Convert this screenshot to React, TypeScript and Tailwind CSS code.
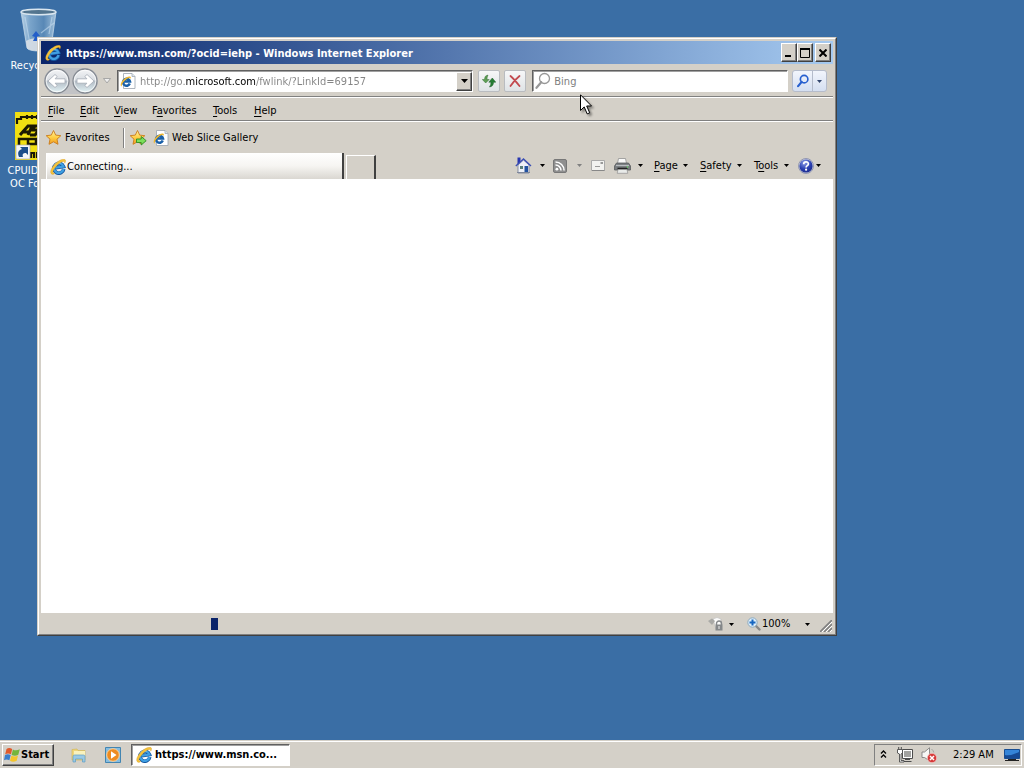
import type { ReactNode } from "react";

type IconProps = { className?: string };

function IeIcon({ className = "size-4" }: IconProps) {
  return (
    <svg viewBox="0 0 16 16" className={`${className} shrink-0`} aria-hidden="true">
      <g transform="rotate(-8 8 8)">
        <path d="M13.400 10.800A4.900 4.900 0 1 1 13.500 8.400H5.500" fill="none" stroke="#14569f" strokeWidth="3.600" />
        <path d="M13.200 10.800A4.800 4.800 0 1 1 13.400 8.300H5.500" fill="none" stroke="#3f9fe2" strokeWidth="2.300" />
        <path d="M4.800 6.200A4.200 4.200 0 0 1 11 4.600" fill="none" stroke="#b9e6fb" strokeWidth="1.200" />
      </g>
      <path d="M3 15.500C-1.200 15 .6 9.400 5.400 4.600 9.800.2 14.800-.8 15.500 1.200c.3.900-.1 2-.7 3 .1-1.900-1.200-2.300-3.200-1.200C8 4.900 4.100 9.300 3 12.200c-.5 1.300.1 2 1.800 1.700-.7.900-1.200 1.500-1.800 1.600Z" fill="#f5c23a" stroke="#c98a14" strokeWidth=".3" />
    </svg>
  );
}

function PageIcon({ className = "size-4" }: IconProps) {
  return (
    <svg viewBox="0 0 16 16" className={`${className} shrink-0`} aria-hidden="true">
      <path d="M3.500 .5H12l3 3V15.500H3.500Z" fill="#fff" stroke="#9aa3ad" strokeWidth=".8" />
      <path d="M12 .5V3.500H15" fill="#dde6ee" stroke="#9aa3ad" strokeWidth=".7" />
      <path d="M9.800 10.600A3.500 3.500 0 1 1 10 8.600H3.600" fill="none" stroke="#1a60a8" strokeWidth="2.500" />
      <path d="M1.500 13.500C-.8 12 2.200 7 6.200 4.600c2.800-1.600 5.200-1.400 4.600 1.100-.5-1-2.200-.9-4 .3C3.800 8 1.700 11 1.500 13.500Z" fill="#eeb62f" />
    </svg>
  );
}

function Star({ add = false }: { add?: boolean }) {
  return (
    <svg viewBox="0 0 18 17" className="h-[17px] w-[18px] shrink-0" aria-hidden="true">
      <defs>
        <linearGradient id="starFill" x1="0" y1="0" x2="0" y2="1">
          <stop offset="0" stopColor="#fff3a6" />
          <stop offset=".5" stopColor="#ffcf45" />
          <stop offset="1" stopColor="#ef9a20" />
        </linearGradient>
      </defs>
      <path d="M8.500 1.500l2.200 4.600 5.100.6-3.800 3.500 1 5.100-4.500-2.500L4 15.300l1-5.100L1.200 6.700l5.100-.6Z" fill="url(#starFill)" stroke="#c97b1a" strokeWidth=".9" strokeLinejoin="round" />
      {add && <path d="M7.500 10h4.700V7.500l5 4.200-5 4.300v-2.500H7.500Z" fill="#7ddf5a" stroke="#2d8c25" strokeWidth=".9" />}
    </svg>
  );
}

function Caret({ className = "text-black" }: IconProps) {
  return (
    <svg viewBox="0 0 5 3" className={`${className} h-[3px] w-[5px] shrink-0`} aria-hidden="true">
      <path d="M0 0H5L2.500 3Z" fill="currentColor" />
    </svg>
  );
}

function NavCircle({ forward = false }: { forward?: boolean }) {
  return (
    <button aria-label={forward ? "Forward" : "Back"} className="size-[26px] shrink-0">
      <svg viewBox="0 0 26 26" className="size-full" aria-hidden="true">
        <defs>
          <linearGradient id="navFill" x1="0" y1="0" x2="0" y2="1">
            <stop offset="0" stopColor="#f4f5f7" />
            <stop offset=".46" stopColor="#d9dde2" />
            <stop offset=".5" stopColor="#b0b9c3" />
            <stop offset="1" stopColor="#e6f6f8" />
          </linearGradient>
        </defs>
        <circle cx="13" cy="13" r="12" fill="url(#navFill)" stroke="#858a92" strokeWidth="1.300" />
        <circle cx="13" cy="13" r="10.800" fill="none" stroke="#fff" strokeOpacity=".75" />
        <g transform={forward ? "matrix(-1 0 0 1 26 0)" : undefined}>
          <path d="M4 13l7-6.500 2.200 2-2.100 2.300H21v4.400h-9.900l2.100 2.300-2.200 2Z" fill="#fff" stroke="#a4abb5" strokeWidth=".8" strokeLinejoin="round" />
        </g>
      </svg>
    </button>
  );
}

function HomeIcon() {
  return (
    <svg viewBox="0 0 17 17" className="size-[17px] shrink-0" aria-hidden="true">
      <path d="M2.500 .5h3v4.500L2.500 8Z" fill="#2836b0" />
      <path d="M3 8l5.500-5L14 8v8H3Z" fill="#eef1f8" stroke="#7e879b" strokeWidth=".9" />
      <path d="M.8 9L8.500 2 16 9" fill="none" stroke="#3b4fb4" strokeWidth="1.300" />
      <path d="M5 9h3v3H5Z" fill="#587f79" />
      <path d="M9.500 9h3.500v6.500H9.500Z" fill="#2252a0" />
      <path d="M2 15.500h13" stroke="#7e879b" />
    </svg>
  );
}

function RssIcon() {
  return (
    <svg viewBox="0 0 14 14" className="size-[14px] shrink-0" aria-hidden="true">
      <rect x=".5" y=".5" width="13" height="13" rx="1.500" fill="#8f8f8f" stroke="#777" />
      <circle cx="3.900" cy="10.200" r="1.400" fill="#fff" />
      <path d="M2.500 6a5.500 5.500 0 0 1 5.500 5.500M2.500 2.900a8.600 8.600 0 0 1 8.600 8.600" fill="none" stroke="#fff" strokeWidth="1.500" />
    </svg>
  );
}

function MailIcon() {
  return (
    <svg viewBox="0 0 14 11" className="h-[11px] w-[14px] shrink-0" aria-hidden="true">
      <path d="M.5.500h13v10H.5Z" fill="#f2f2f0" stroke="#aaa" />
      <path d="M9.500 2h2.500v2H9.500Z" fill="#999" />
      <path d="M4 6.500h5" stroke="#999" />
      <path d="M1 10.500h12.500" stroke="#888" />
    </svg>
  );
}

function PrinterIcon() {
  return (
    <svg viewBox="0 0 17 16" className="h-4 w-[17px] shrink-0" aria-hidden="true">
      <path d="M4.500.5h7l1 5h-9Z" fill="#fafafa" stroke="#929292" strokeWidth=".8" />
      <path d="M2.500 5h12l2 3v4H.5V8Z" fill="#777b7e" stroke="#595c5e" strokeWidth=".8" />
      <path d="M2 7.500h13" stroke="#b8bcbf" strokeWidth="1.200" />
      <path d="M3.500 10.500h10" stroke="#222" strokeWidth="1.600" />
      <path d="M4 11.500h9l.8 3.800H3.200Z" fill="#e9ebe9" stroke="#919191" strokeWidth=".7" />
      <circle cx="13.500" cy="9" r=".8" fill="#6be06b" />
    </svg>
  );
}

function HelpIcon() {
  return (
    <svg viewBox="0 0 16 16" className="size-4 shrink-0" aria-hidden="true">
      <defs>
        <radialGradient id="helpFill" cx=".4" cy=".25" r=".8">
          <stop offset="0" stopColor="#8c9ee8" />
          <stop offset=".6" stopColor="#2a3fb0" />
          <stop offset="1" stopColor="#1b2b8a" />
        </radialGradient>
      </defs>
      <circle cx="8" cy="8" r="7.500" fill="#c9cddd" stroke="#8088a8" strokeWidth=".8" />
      <circle cx="8" cy="8" r="6.600" fill="url(#helpFill)" />
      <path d="M5.700 6.200c0-3 4.700-3 4.700-.2 0 1.600-2.300 1.700-2.300 3.400" fill="none" stroke="#fff" strokeWidth="1.700" />
      <circle cx="8.100" cy="11.700" r="1.100" fill="#fff" />
    </svg>
  );
}

function Magnifier({ className = "", thin = false }: IconProps & { thin?: boolean }) {
  return (
    <svg viewBox="0 0 16 18" className={`${className} shrink-0`} fill="none" aria-hidden="true">
      <circle cx="9.500" cy="6.500" r="5" stroke="currentColor" strokeWidth={thin ? 1.300 : 2.200} />
      <path d="M6.200 10.200L1.500 15.800" stroke="currentColor" strokeWidth={thin ? 2.200 : 3} strokeLinecap="round" />
    </svg>
  );
}

function RecycleBin() {
  return (
    <svg viewBox="0 0 40 48" className="h-12 w-10" aria-hidden="true">
      <defs>
        <linearGradient id="binFill" x1="0" x2="1">
          <stop offset="0" stopColor="#b9d2e6" />
          <stop offset=".25" stopColor="#7ba5cb" />
          <stop offset=".65" stopColor="#5888b6" />
          <stop offset="1" stopColor="#a4c2db" />
        </linearGradient>
      </defs>
      <path d="M2 5l6 36c1 4 23 4 24 0L37 5Z" fill="url(#binFill)" stroke="#c2d7e8" strokeWidth=".8" />
      <path d="M7 34c6-4 20-4 26 0l-1 7c-2 4-22 4-24 0Z" fill="#dfe3e8" opacity=".85" />
      <path d="M6 10l5 27M33 10l-3 17M22 26l13-10" stroke="#c5dcef" strokeWidth="1.200" opacity=".6" />
      <path d="M13 29l4-5 4 5h-3l3 5h-7l2-4Z" fill="#245fc9" />
      <ellipse cx="19.500" cy="5" rx="17.500" ry="2.800" fill="#53758f" stroke="#dbe7f0" strokeWidth="1.400" />
    </svg>
  );
}

function CpuIcon() {
  return (
    <svg viewBox="0 0 48 48" className="size-12" aria-hidden="true">
      <path d="M0 0H48V48H0Z" fill="#f0df12" />
      <path d="M2 12V7h4V5h37v7M12 3v4m5-4v4m5-4v4m5-4v4m5-4v4m5-4v4M16 46v-5h3v5m3 0v-5h3v5m3 0v-5h3v5" fill="none" stroke="#1b1903" strokeWidth="2.200" />
      <path d="M5 23l8-9h4l-4 9M8 20h7M28 14h-8l-3 4h7l-4 5h-5" fill="none" stroke="#1b1903" strokeWidth="3" />
      <path d="M13 27H4v8M13 37V27h8v5h-7M24 26v9" fill="none" stroke="#1b1903" strokeWidth="2.500" />
      <path d="M1 33h14v14H1Z" fill="#f5f7f9" stroke="#aaa" strokeWidth=".7" />
      <path d="M4 45c-2-5 0-7 3-8L5 35h8v8l-2-2c-3 0-4 1-3 4Z" fill="#1c4e8a" />
    </svg>
  );
}

function DesktopIcon({ icon, children }: { icon: ReactNode; children: ReactNode }) {
  return (
    <button className="flex w-[78px] flex-col items-center gap-1 leading-[13px] text-white">
      {icon}
      <span>{children}</span>
    </button>
  );
}

const bevel = "border border-t-white border-l-white border-r-[#404040] border-b-[#404040] bg-[#d4d0c8] shadow-[inset_-1px_-1px_#808080]";

function CommandMenu({ mnemonic, before = "", after, className }: { mnemonic: string; before?: string; after: string; className: string }) {
  return (
    <button className={`${className} flex shrink-0 items-center justify-between`}>
      <span>{before}<u className="underline-offset-2">{mnemonic}</u>{after}</span>
      <Caret />
    </button>
  );
}

function TitleBar() {
  return (
    <header className="flex h-[23px] shrink-0 items-center bg-linear-to-r from-[#0a246a] to-[#a6caf0] pr-[2px] pl-1 font-bold text-white">
      <IeIcon />
      <h1 className="ml-[5px] grow truncate pt-[2px]">https://www.msn.com/?ocid=iehp - Windows Internet Explorer</h1>
      <button aria-label="Minimize" className={`${bevel} flex h-[19px] w-4 items-end pb-[4px] pl-[3px]`}>
        <svg viewBox="0 0 6 2" className="h-[2px] w-[6px]" aria-hidden="true"><path d="M0 0H6V2H0Z" /></svg>
      </button>
      <button aria-label="Maximize" className={`${bevel} flex h-[19px] w-4 items-center justify-center`}>
        <svg viewBox="0 0 10 10" className="size-[10px]" aria-hidden="true"><path d="M.5 1V9.500H9.500V1M0 1H10" fill="none" stroke="#000" /><path d="M0 0H10V2H0Z" /></svg>
      </button>
      <button aria-label="Close" className={`${bevel} ml-[2px] flex h-[19px] w-4 items-center justify-center`}>
        <svg viewBox="0 0 8 8" className="size-2" aria-hidden="true"><path d="M.5.500l7 7M7.500.500l-7 7" stroke="#000" strokeWidth="2" /></svg>
      </button>
    </header>
  );
}

const softButton = "flex items-center justify-center rounded-[2px] border border-[#b9bcc0] bg-linear-to-b from-[#f6f7f8] to-[#dfe3e6]";
const sunken = "border border-t-[#606060] border-l-[#606060] border-r-white border-b-white bg-white shadow-[inset_1px_1px_#a0a0a0]";

function NavigationBar() {
  return (
    <div className="flex h-[33px] shrink-0 items-center border-b border-[#808080] pt-[2px] pr-[6px] pl-[3px]">
      <div className="flex shrink-0 gap-[2px] rounded-full bg-[#c2c3c6]">
        <NavCircle />
        <NavCircle forward />
      </div>
      <button aria-label="Recent pages" className="ml-[5px] shrink-0">
        <svg viewBox="0 0 8 6" className="h-[6px] w-2" aria-hidden="true"><path d="M.5.500h7L4 5Z" fill="#eee" stroke="#999" strokeWidth=".8" /></svg>
      </button>
      <form className={`${sunken} ml-[6px] flex h-[22px] min-w-0 flex-[357] items-center pl-[2px]`}>
        <PageIcon />
        <input
          aria-label="Address"
          defaultValue="http://go.microsoft.com/fwlink/?LinkId=69157"
          className="ml-1 min-w-0 grow bg-[linear-gradient(to_right,#848484_46px,#000_46px,#000_116px,#848484_116px)] bg-clip-text pt-[2px] text-transparent outline-none"
        />
        <button type="button" aria-label="Show addresses" className={`${bevel} flex h-[19px] w-4 shrink-0 items-center justify-center`}>
          <svg viewBox="0 0 7 4" className="h-1 w-[7px]" aria-hidden="true"><path d="M0 0H7L3.500 4Z" /></svg>
        </button>
      </form>
      <button aria-label="Refresh" className={`${softButton} ml-[5px] h-[22px] w-[22px] shrink-0`}>
        <svg viewBox="0 0 14 14" className="size-[14px]" aria-hidden="true">
          <path d="M3.700 9L.3 5.500h2.200Q2.300 1.500 6 1 4.900 3 5 5.500H7.200Z" fill="#5f9f55" stroke="#37713a" strokeWidth=".5" />
          <path d="M10.300 4l3.500 4.200h-2.300Q11.600 12.200 7.500 13 9 11 9 8.200H6.800Z" fill="#257d33" stroke="#1b5b28" strokeWidth=".5" />
        </svg>
      </button>
      <button aria-label="Stop" className={`${softButton} ml-1 h-[22px] w-[22px] shrink-0`}>
        <svg viewBox="0 0 12 12" className="size-3" aria-hidden="true">
          <path d="M1.500 1Q5 4 10.500 11M10.500 1Q6 4.500 1.500 11" fill="none" stroke="#c24a50" strokeWidth="1.800" strokeLinecap="round" />
        </svg>
      </button>
      <label className={`${sunken} ml-[6px] flex h-[22px] min-w-0 flex-[255] items-center pl-[2px]`}>
        <Magnifier thin className="h-[18px] w-4 text-[#989898]" />
        <input aria-label="Search" placeholder="Bing" className="ml-[3px] min-w-0 grow pt-[2px] outline-none placeholder:text-[#808080]" />
      </label>
      <div className="ml-1 flex h-[22px] w-[35px] shrink-0 rounded-[3px] border border-[#b5bccb] bg-linear-to-b from-[#f2f5fc] to-[#d5dff1]">
        <button aria-label="Run search" className="flex w-5 items-center justify-center border-r border-[#b5bccb]">
          <Magnifier className="h-[14px] w-3 text-[#2860cf]" />
        </button>
        <button aria-label="Search options" className="flex grow items-center justify-center"><Caret className="text-[#32466e]" /></button>
      </div>
    </div>
  );
}

const menus = [
  { before: "", key: "F", after: "ile", width: "w-8" },
  { before: "", key: "E", after: "dit", width: "w-[34px]" },
  { before: "", key: "V", after: "iew", width: "w-[38px]" },
  { before: "F", key: "a", after: "vorites", width: "w-[61px]" },
  { before: "", key: "T", after: "ools", width: "w-[41px]" },
  { before: "", key: "H", after: "elp", width: "w-8" },
];

function Browser() {
  return (
    <section className="absolute top-[37px] right-[187px] bottom-[104px] left-[37px] border border-t-[#d4d0c8] border-r-[#404040] border-b-[#404040] border-l-[#d4d0c8]">
      <div className="flex h-full flex-col border border-t-white border-r-[#808080] border-b-[#808080] border-l-white bg-[#d4d0c8] p-[2px]">
        <TitleBar />
        <NavigationBar />
        <nav className="flex h-[23px] shrink-0 items-center border-t border-t-white pt-[3px] pl-[7px]">
          {menus.map((m) => (
            <button key={m.after} className={`${m.width} shrink-0 text-left`}>
              {m.before}<u className="underline-offset-2">{m.key}</u>{m.after}
            </button>
          ))}
        </nav>
        <div className="flex h-8 shrink-0 items-center border-t border-[#808080] pt-[2px] pl-1 shadow-[inset_0_1px_white]">
          <button className="flex w-[78px] shrink-0 items-center gap-[2px]"><Star />Favorites</button>
          <span className="h-5 w-[2px] shrink-0 border-r border-l border-r-white border-l-[#808080]" />
          <button aria-label="Add to Favorites Bar" className="ml-1"><Star add /></button>
          <button className="ml-[6px] flex items-center gap-[3px] whitespace-nowrap"><PageIcon />Web Slice Gallery</button>
        </div>
        <div className="flex h-[27px] shrink-0 items-end pl-[5px]">
          <button className="flex h-[26px] min-w-0 flex-[300] items-center gap-px border-r-2 border-l border-r-[#404040] border-l-white bg-linear-to-b from-white via-[#f6f5f2] to-[#dad7d1] pt-[2px] pl-[3px]">
            <IeIcon />Connecting...
          </button>
          <button aria-label="New tab" className="ml-[2px] h-6 w-[30px] shrink-0 border-t border-r-2 border-l border-t-white border-r-[#404040] border-l-white" />
          <div className="ml-1 flex h-[27px] min-w-[310px] flex-[454] items-center justify-end pr-3">
            <button aria-label="Home" className="flex w-[38px] shrink-0 items-center gap-2"><HomeIcon /><Caret /></button>
            <button aria-label="Feeds" className="flex w-[38px] shrink-0 items-center gap-[10px]"><RssIcon /><Caret className="text-[#808080]" /></button>
            <button aria-label="Read mail" className="w-[23px] shrink-0"><MailIcon /></button>
            <button aria-label="Print" className="flex w-10 shrink-0 items-center gap-[7px]"><PrinterIcon /><Caret /></button>
            <CommandMenu mnemonic="P" after="age" className="mr-3 w-[34px]" />
            <CommandMenu mnemonic="S" after="afety" className="mr-3 w-[42px]" />
            <CommandMenu before="T" mnemonic="o" after="ols" className="mr-[9px] w-[35px]" />
            <button aria-label="Help" className="flex shrink-0 items-center gap-[2px]"><HelpIcon /><Caret /></button>
          </div>
        </div>
        <main className="min-h-0 grow bg-white" />
        <footer className="flex h-[19px] shrink-0 items-center">
          <div role="progressbar" aria-label="Loading page" className="grow pl-[170px]">
            <div className="mt-[3px] h-3 w-[7px] bg-[#0a246a]" />
          </div>
          <button aria-label="Protection settings" className="flex w-[39px] shrink-0 items-center gap-[5px] pt-[3px]">
            <svg viewBox="0 0 16 14" className="h-[14px] w-4" aria-hidden="true">
              <path d="M5 2q4-3 8 0v10H8Z" fill="#fbfbfa" stroke="#bbb" strokeWidth=".6" />
              <path d="M0 4l4-2.500L7 4 4 8Z" fill="#a9a9a6" />
              <path d="M8.500 8V6.500a2.500 2.500 0 0 1 5 0V8" fill="none" stroke="#85888a" strokeWidth="1.400" />
              <path d="M7.500 7.500h7v6h-7Z" fill="#85888a" />
              <path d="M11 9v3" stroke="#eee" />
            </svg>
            <Caret />
          </button>
          <button className="flex w-[63px] shrink-0 items-center pt-[3px]">
            <svg viewBox="0 0 14 14" className="mr-px size-[14px] shrink-0" aria-hidden="true">
              <path d="M8.500 8.500l4 4" stroke="#888" strokeWidth="2.400" strokeLinecap="round" />
              <circle cx="5.500" cy="5.500" r="4.700" fill="#dceefb" stroke="#8ca9be" />
              <path d="M5.500 2.500v6M2.500 5.500h6" stroke="#1766c0" strokeWidth="2" />
            </svg>
            <span className="grow text-left">100%</span>
            <Caret />
          </button>
          <svg viewBox="0 0 12 12" className="mt-[7px] mr-px ml-[10px] size-3 shrink-0" aria-hidden="true">
            <path d="M0 12L12 0M4 12l8-8M8 12l4-4" stroke="#808080" strokeWidth="1.600" />
            <path d="M2 12L12 2M6 12l6-6M10 12l2-2" stroke="#fff" />
          </svg>
        </footer>
      </div>
    </section>
  );
}

function Taskbar() {
  return (
    <footer className="flex h-7 shrink-0 items-center border-t border-[#d4d0c8] bg-[#d4d0c8] pt-px pr-[2px] pl-[2px] shadow-[inset_0_1px_white]">
      <button className={`${bevel} flex h-[22px] w-[52px] items-center gap-px pl-px font-bold`}>
        <svg viewBox="0 0 16 16" className="size-4 shrink-0" aria-hidden="true">
          <path d="M2.500 2Q5 0 8.200 2L7 7.300Q4 5.800 1.200 7.300Z" fill="#e05a2c" />
          <path d="M8.900 2.500Q12 4.300 15.800 2.300L14.300 7.800Q11 9.500 7.600 7.900Z" fill="#74b53c" />
          <path d="M1 8.100Q3.800 6.600 6.700 8.100L5.400 13.300Q2.500 11.800 0 13.300Z" fill="#3a7ecc" />
          <path d="M7.400 8.700Q10.800 10.300 14 8.600L12.700 13.700Q9 15.600 6 13.800Z" fill="#f4c52b" />
        </svg>
        Start
      </button>
      <button aria-label="File Explorer" className="ml-[17px]">
        <svg viewBox="0 0 16 16" className="size-4" aria-hidden="true">
          <path d="M1 2.500l5-.5 1 1.500h7V13H1Z" fill="#f0d67a" stroke="#d0b34f" strokeWidth=".6" />
          <path d="M3 4h11v5H3Z" fill="#f9f2bd" />
          <path d="M2 15V9.500q0-1.500 1.500-1.500h9q1.500 0 1.500 1.500V15h-2.500v-3h-7v3Z" fill="#9ac9e4" stroke="#5e9ec4" strokeWidth=".7" />
        </svg>
      </button>
      <button aria-label="Media Player" className="ml-[18px]">
        <svg viewBox="0 0 16 16" className="size-4" aria-hidden="true">
          <path d="M.5.500h15v15H.5Z" fill="#86bde0" stroke="#4385b1" />
          <circle cx="8" cy="8" r="6.300" fill="#ee8b20" stroke="#f8d4a4" />
          <path d="M6 4.300v7.400L11.500 8Z" fill="#fff" />
        </svg>
      </button>
      <button className={`${sunken} ml-[10px] flex h-[22px] w-[159px] items-center gap-[3px] pl-1 font-bold`}>
        <IeIcon />https://www.msn.co...
      </button>
      <div className="ml-auto flex h-[22px] w-[148px] items-center border border-t-[#808080] border-r-white border-b-white border-l-[#808080] pr-px pl-[5px]">
        <button aria-label="Show hidden icons">
          <svg viewBox="0 0 7 9" className="mb-[2px] h-[9px] w-[7px]" aria-hidden="true"><path d="M1 3.500L3.500 1 6 3.500M1 7.500L3.500 5 6 7.500" fill="none" stroke="#000" strokeWidth="1.300" /></svg>
        </button>
        <button aria-label="Network" className="ml-[10px]">
          <svg viewBox="0 0 16 16" className="size-4" aria-hidden="true">
            <path d="M5.500 2.500h10v9h-10Z" fill="#fff" stroke="#4c4c4c" />
            <path d="M7 4h7v6H7Z" fill="#a2a2a0" />
            <path d="M8 12.500h5M6.500 14.500h8" stroke="#4c4c4c" strokeWidth="1.200" />
            <path d="M.5 2.500h5v3.500l-1.500 1v6.500h3v1.500H2.500V7L.5 6Z" fill="#fff" stroke="#4c4c4c" strokeWidth=".9" />
            <path d="M1.700 0v2.500M4.300 0v2.500" stroke="#4c4c4c" />
          </svg>
        </button>
        <button aria-label="Volume" className="ml-2">
          <svg viewBox="0 0 16 16" className="size-4" aria-hidden="true">
            <path d="M1 5h2.500L8.500 .8v13L3.500 10.500H1Z" fill="#f7f7f5" stroke="#757575" strokeWidth=".8" />
            <path d="M10.500 2q2 1.500 2.300 3.500" fill="none" stroke="#a5a5a3" />
            <circle cx="11" cy="11" r="4.700" fill="#d63a3a" stroke="#f4d0cd" strokeWidth=".7" />
            <path d="M9 9l4 4M13 9l-4 4" stroke="#fff" strokeWidth="1.500" />
          </svg>
        </button>
        <time className="ml-4 grow whitespace-nowrap">2:29 AM</time>
        <button aria-label="Show desktop">
          <svg viewBox="0 0 16 14" className="h-[14px] w-4" aria-hidden="true">
            <path d="M.5 1.500h15v9H.5Z" fill="#3585d8" stroke="#194d91" />
            <path d="M1 7Q7 8 15 4v6H1Z" fill="#164a94" />
            <path d="M1 12.500h14M4 11.500h8" stroke="#222" />
          </svg>
        </button>
      </div>
    </footer>
  );
}

export default function App() {
  return (
    <div className="flex h-screen flex-col overflow-hidden bg-[#3a6ea5] font-['DejaVu_Sans_Condensed','DejaVu_Sans',sans-serif] text-[11px] leading-[14px] text-black">
      <div className="relative min-h-0 grow">
        <div className="flex flex-col items-start gap-10 pt-[7px]">
          <DesktopIcon icon={<RecycleBin />}>Recycle Bin</DesktopIcon>
          <DesktopIcon icon={<CpuIcon />}>CPUID ASR...<br />OC Formula</DesktopIcon>
        </div>
        <Browser />
        <svg viewBox="0 0 14 22" className="pointer-events-none absolute top-[94px] left-[580px] h-[22px] w-[14px] drop-shadow-[2px_2px_1px_rgba(0,0,0,0.4)]" aria-hidden="true">
          <path d="M.5.800V16.500l3.700-3.600 3 7 2.500-1.100-3-6.800H11.500Z" fill="#fff" stroke="#000" />
        </svg>
      </div>
      <Taskbar />
    </div>
  );
}
